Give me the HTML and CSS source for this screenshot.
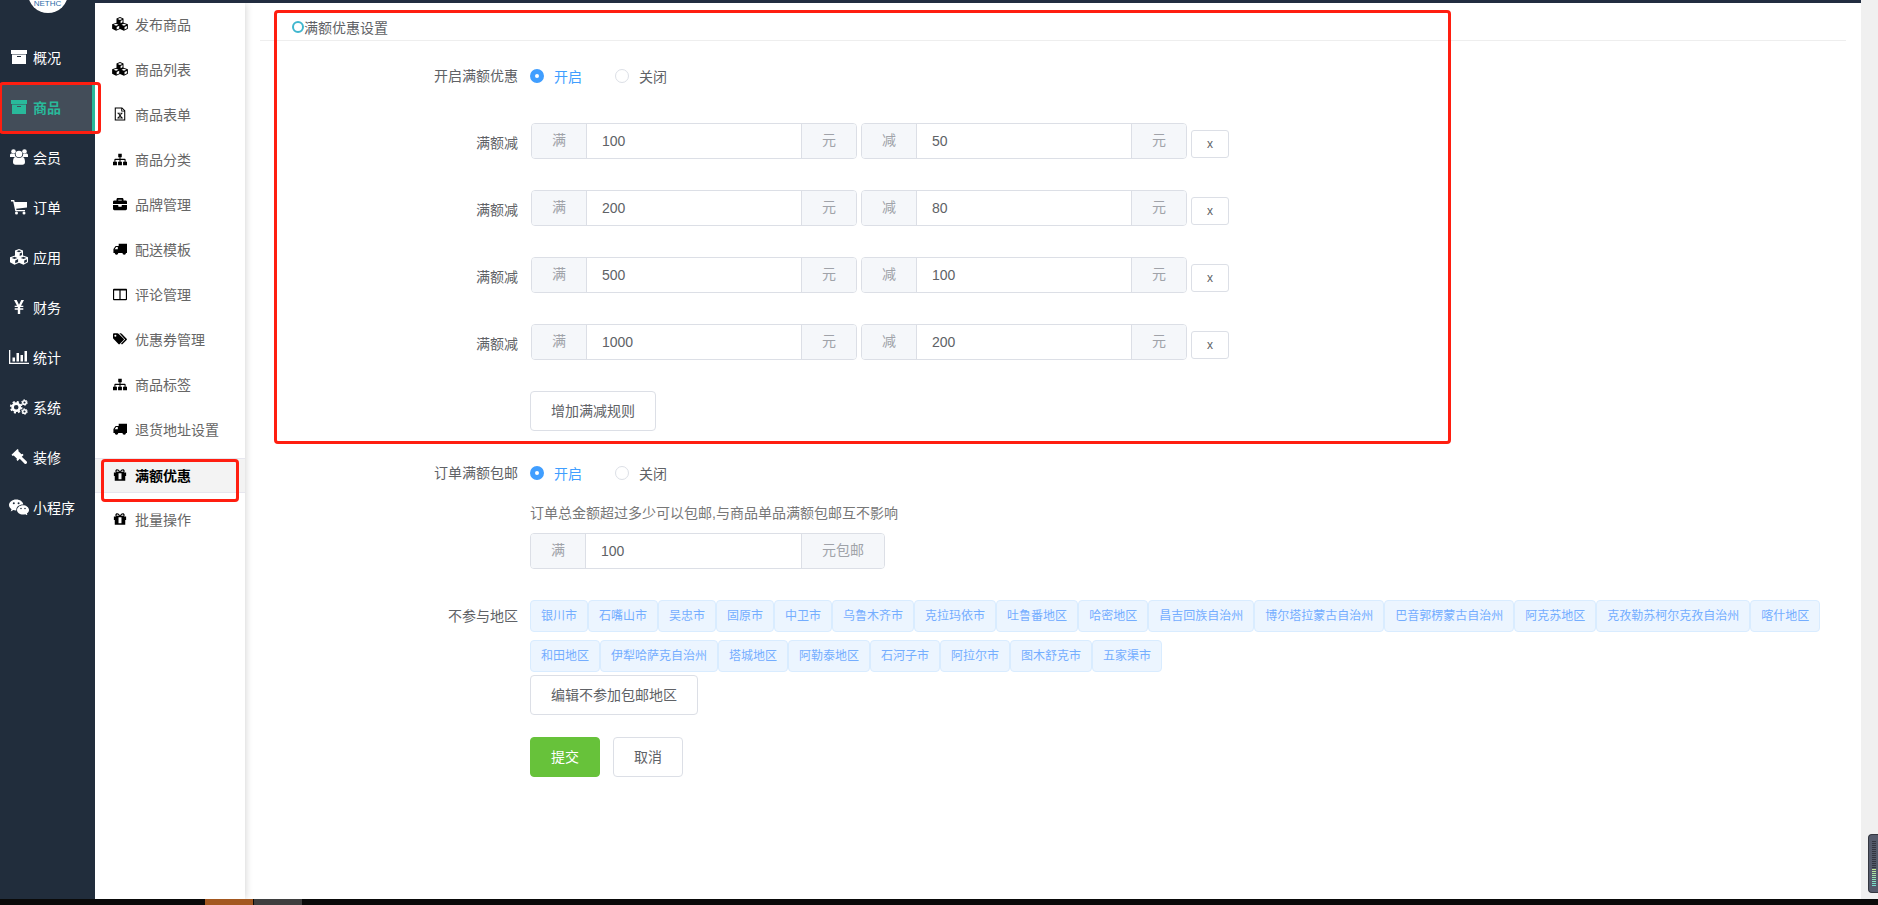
FILE: index.html
```html
<!DOCTYPE html>
<html lang="zh-CN">
<head>
    <meta charset="UTF-8">
    <meta name="viewport" content="width=device-width, initial-scale=1.0">
    <title>满额优惠设置</title>
    <link rel="stylesheet" href="styles.css">
</head>
<body>
    <svg class="sprite" aria-hidden="true">
        <symbol id="i-archive" viewBox="0 0 16 16"><path d="M0 1h16v4H0zM1 5.500h14V15H1zM6 7h4v1H6z" fill-rule="evenodd"/></symbol>
        <symbol id="i-cubes" viewBox="0 0 18 16"><path fill-rule="evenodd" d="M9 0l4 1.600v4.900l5 1.800v5L13.500 15.800 9 13.700l-4.500 2.100L0 13.300v-5l5-1.800V1.600zM9 1.200L6.400 2.200 9 3.300l2.600-1.100zM9.700 4.600v2.500l2.200-1V3.500zM4.500 7.800L1.700 8.900l2.800 1.200 2.800-1.200zM5.200 11.400v2.900l2.900-1.300v-2.900zM13.500 7.800l-2.800 1.100 2.800 1.200 2.800-1.200zM14.200 11.400v2.900l2.700-1.500v-2.600z"/></symbol>
        <symbol id="i-users" viewBox="0 0 18 16"><circle cx="3.500" cy="2.500" r="2.300"/><circle cx="14.500" cy="2.500" r="2.300"/><circle cx="9" cy="5" r="3.300"/><path d="M0 8V6.500C0 5 .8 4.300 1.800 4.600c1 .6 2 .6 3 .3 0 1.200.4 2.300 1.200 3.100H0zM18 8V6.500c0-1.500-.8-2.200-1.800-1.900-1 .6-2 .6-3 .3 0 1.200-.4 2.300-1.200 3.100zM3 13c0-3 1-5 3-4.900 1.900 1.200 4.100 1.200 6 0 2-.1 3 1.900 3 4.900 0 1.800-1 2.700-2.500 2.700h-7C4 15.700 3 14.800 3 13z"/></symbol>
        <symbol id="i-cart" viewBox="0 0 16 16"><path d="M0 1h3.200l.5 2H16v5.400L5.200 9.800l.3 1.200H14v1.300H4.300L2.200 2.400H0z"/><circle cx="5.500" cy="14" r="1.500"/><circle cx="13" cy="14" r="1.500"/></symbol>
        <symbol id="i-yen" viewBox="0 0 16 16"><path d="M3 1h2.700L8 5.800 10.300 1H13L10 6.700h2.300v1.400H9.200v1.200h3.100v1.400H9.200V15H6.800v-4.300H3.700V9.300h3.100V8.100H3.700V6.700H6z"/></symbol>
        <symbol id="i-chart" viewBox="0 0 20 16"><path d="M0 1h1.300v12.700H20V15H0zM3.500 8.500H6v4H3.500zM7.500 4H10v8.500H7.500zM11.500 6H14v6.500h-2.500zM15.500 2H18v10.500h-2.500z"/></symbol>
        <symbol id="i-cogs" viewBox="0 0 18 16"><circle cx="6.200" cy="8.200" r="3.600" fill="none" stroke="currentColor" stroke-width="2.600"/><circle cx="6.200" cy="8.200" r="5.400" fill="none" stroke="currentColor" stroke-width="1.800" stroke-dasharray="2.120 2.120"/><circle cx="14.500" cy="3.500" r="1.800" fill="none" stroke="currentColor" stroke-width="1.500"/><circle cx="14.500" cy="3.500" r="2.800" fill="none" stroke="currentColor" stroke-width="1" stroke-dasharray="1.470 1.470"/><circle cx="14.500" cy="12.500" r="1.800" fill="none" stroke="currentColor" stroke-width="1.500"/><circle cx="14.500" cy="12.500" r="2.800" fill="none" stroke="currentColor" stroke-width="1" stroke-dasharray="1.470 1.470"/></symbol>
        <symbol id="i-gavel" viewBox="0 0 16 16"><path d="M6.500 0l1.200 1-.5 1 3.300 3.300 1-.5 1.100 1.100-6 6-1.100-1.100.5-1L2.700 6.500l-1 .5L.5 5.800z"/><path d="M10.500 7.500l5 4.800c.7.700.7 1.600.1 2.200s-1.600.6-2.200-.1l-4.900-4.900z"/></symbol>
        <symbol id="i-wechat" viewBox="0 0 20 16"><path fill-rule="evenodd" d="M7.200.5c4 0 6.700 2.300 7.100 4.900-4.300-.1-7.300 2.500-7 6-1 .1-1.900-.1-2.900-.3L1.700 12.500l.8-2.300C1 9.100 0 7.700 0 6 0 3 3.200.5 7.200.5zM4.800 3.200a1 1 0 100 2 1 1 0 000-2zM9.600 3.200a1 1 0 100 2 1 1 0 000-2z"/><path fill-rule="evenodd" d="M14 6.200c3.300 0 6 2.100 6 4.800 0 1.400-.8 2.700-2.100 3.600l.6 1.900-2.200-1.200c-.7.200-1.500.3-2.300.3-3.400 0-6-2-6-4.600s2.700-4.800 6-4.800zM12 8.700a.8.800 0 100 1.600.8.800 0 000-1.600zM16 8.700a.8.800 0 100 1.600.8.800 0 000-1.600z"/></symbol>
        <symbol id="i-excel" viewBox="0 0 14 16"><path fill-rule="evenodd" d="M1 .5h8.500L13 4v11.500H1zM2.200 1.700v12.600h9.600V5.200H8.400V1.700zM9.500 2v2.200h2.100z"/><path d="M4 6.500h2.800v1h-.6L7.100 9l.9-1.500h-.6v-1H10v1h-.7l-1.500 2.300L9.500 12h.7v1H7.300v-1h.7l-1-1.500L6.100 12h.6v1H4v-1h.7l1.600-2.200-1.500-2.300H4z"/></symbol>
        <symbol id="i-sitemap" viewBox="0 0 16 16"><path d="M6 2h4v4H8.600v1.800h4.900c.6 0 .9.400.9.900V11H16v4h-4.500v-4h1.700V9H8.600v2h1.600v4H5.800v-4h1.600V9H2.800v2h1.700v4H0v-4h1.600V8.700c0-.5.300-.9.900-.9h4.900V6H6z"/></symbol>
        <symbol id="i-briefcase" viewBox="0 0 512 512"><path d="M320 336c0 8.840-7.160 16-16 16h-96c-8.840 0-16-7.160-16-16v-48H0v144c0 25.600 22.400 48 48 48h416c25.600 0 48-22.400 48-48V288H320v48zm144-208h-80V80c0-25.600-22.400-48-48-48H176c-25.600 0-48 22.400-48 48v48H48c-25.600 0-48 22.400-48 48v80h512v-80c0-25.600-22.400-48-48-48zm-144 0H192V96h128v32z"/></symbol>
        <symbol id="i-truck" viewBox="0 0 16 16"><path fill-rule="evenodd" d="M6.500 2H16v10.500h-1.200a2 2 0 01-4 0H6a2 2 0 01-4 0H.5V8L3 4.500h3.500zM5.500 5.700H3.600L1.900 8.200h3.600z"/><circle cx="4" cy="12.700" r="1.300"/><circle cx="12.800" cy="12.700" r="1.300"/></symbol>
        <symbol id="i-columns" viewBox="0 0 16 16"><path fill-rule="evenodd" d="M1 2h14c.5 0 1 .4 1 1v11c0 .6-.5 1-1 1H1c-.5 0-1-.4-1-1V3c0-.6.500-1 1-1zm.3 2v9.700h6V4zm7.400 0v9.700h6V4z"/></symbol>
        <symbol id="i-tags" viewBox="0 0 16 16"><path fill-rule="evenodd" d="M0 2.500C0 2 .4 1.500 1 1.500h4c.5 0 1.200.3 1.600.7l5.600 5.500c.5.500.5 1 0 1.500l-4.500 4.600c-.5.500-1 .5-1.500 0L.7 8.100C.3 7.700 0 7 0 6.500zM2.700 3a1.200 1.200 0 100 2.400 1.200 1.200 0 000-2.400z"/><path d="M7.300 1.500h1.400c.5 0 1.200.3 1.600.7l5.300 5.500c.5.500.5 1 0 1.500L11 13.800c-.5.500-1 .5-1.400 0l-.5-.5 4.700-4.800z"/></symbol>
        <symbol id="i-gift" viewBox="0 0 16 16"><path fill-rule="evenodd" d="M4.800 1.500c1.300 0 2.300 1 3.200 2.600.9-1.600 1.900-2.600 3.200-2.600 1.200 0 2.100.8 2.100 1.900 0 .7-.2 1.100-.6 1.600H15v4h-1v5.500H2V9H1V5h2.300c-.4-.5-.6-.9-.6-1.600 0-1.100.9-1.900 2.100-1.900zm0 1.300a.8.800 0 000 1.600h2c-.5-1-1.200-1.600-2-1.600zm6.400 0c-.8 0-1.500.6-2 1.600h2a.8.800 0 000-1.600zM6.300 6v6.800h3.400V6z"/></symbol>
    </svg>

    <nav class="nav">
        <div class="logo"><div class="logo-circle"><span class="logo-name">智慧商汇</span><span class="logo-en">NETHC</span></div></div>
        <a href="#"><svg><use href="#i-archive"/></svg>概况</a>
        <a href="#" class="active"><svg><use href="#i-archive"/></svg>商品<span class="mark mark-nav"></span></a>
        <a href="#"><svg><use href="#i-users"/></svg>会员</a>
        <a href="#"><svg><use href="#i-cart"/></svg>订单</a>
        <a href="#"><svg><use href="#i-cubes"/></svg>应用</a>
        <a href="#"><svg><use href="#i-yen"/></svg>财务</a>
        <a href="#"><svg><use href="#i-chart"/></svg>统计</a>
        <a href="#"><svg><use href="#i-cogs"/></svg>系统</a>
        <a href="#"><svg><use href="#i-gavel"/></svg>装修</a>
        <a href="#"><svg><use href="#i-wechat"/></svg>小程序</a>
    </nav>

    <div class="page">
        <nav class="submenu">
            <a href="#"><svg><use href="#i-cubes"/></svg>发布商品</a>
            <a href="#"><svg><use href="#i-cubes"/></svg>商品列表</a>
            <a href="#"><svg><use href="#i-excel"/></svg>商品表单</a>
            <a href="#"><svg><use href="#i-sitemap"/></svg>商品分类</a>
            <a href="#"><svg><use href="#i-briefcase"/></svg>品牌管理</a>
            <a href="#"><svg><use href="#i-truck"/></svg>配送模板</a>
            <a href="#"><svg><use href="#i-columns"/></svg>评论管理</a>
            <a href="#"><svg><use href="#i-tags"/></svg>优惠券管理</a>
            <a href="#"><svg><use href="#i-sitemap"/></svg>商品标签</a>
            <a href="#"><svg><use href="#i-truck"/></svg>退货地址设置</a>
            <a href="#" class="active"><svg><use href="#i-gift"/></svg>满额优惠<span class="mark mark-sub"></span></a>
            <a href="#"><svg><use href="#i-gift"/></svg>批量操作</a>
        </nav>

        <main class="content">
            <form>
                <section class="rules">
                    <h1><span class="ring"></span>满额优惠设置</h1>
                    <div class="row row-switch">
                        <span class="label">开启满额优惠</span>
                        <div class="field radios">
                            <label><input type="radio" name="enough" checked><span>开启</span></label>
                            <label><input type="radio" name="enough"><span>关闭</span></label>
                        </div>
                    </div>
                    <div class="row row-rule">
                        <label class="label" for="full1">满额减</label>
                        <div class="field rule">
                            <div class="group"><span>满</span><input type="text" id="full1" value="100"><span>元</span></div>
                            <div class="group"><span>减</span><input type="text" aria-label="减" value="50"><span>元</span></div>
                            <button type="button" class="btn btn-small">x</button>
                        </div>
                    </div>
                    <div class="row row-rule">
                        <label class="label" for="full2">满额减</label>
                        <div class="field rule">
                            <div class="group"><span>满</span><input type="text" id="full2" value="200"><span>元</span></div>
                            <div class="group"><span>减</span><input type="text" aria-label="减" value="80"><span>元</span></div>
                            <button type="button" class="btn btn-small">x</button>
                        </div>
                    </div>
                    <div class="row row-rule">
                        <label class="label" for="full3">满额减</label>
                        <div class="field rule">
                            <div class="group"><span>满</span><input type="text" id="full3" value="500"><span>元</span></div>
                            <div class="group"><span>减</span><input type="text" aria-label="减" value="100"><span>元</span></div>
                            <button type="button" class="btn btn-small">x</button>
                        </div>
                    </div>
                    <div class="row row-rule">
                        <label class="label" for="full4">满额减</label>
                        <div class="field rule">
                            <div class="group"><span>满</span><input type="text" id="full4" value="1000"><span>元</span></div>
                            <div class="group"><span>减</span><input type="text" aria-label="减" value="200"><span>元</span></div>
                            <button type="button" class="btn btn-small">x</button>
                        </div>
                    </div>
                    <div class="row">
                        <span class="label"></span>
                        <div class="field"><button type="button" class="btn">增加满减规则</button></div>
                    </div>
                    <span class="mark mark-rules"></span>
                </section>

                <div class="row">
                    <span class="label">订单满额包邮</span>
                    <div class="field">
                        <div class="radios">
                            <label><input type="radio" name="free" checked><span>开启</span></label>
                            <label><input type="radio" name="free"><span>关闭</span></label>
                        </div>
                        <label class="hint" for="freeFull">订单总金额超过多少可以包邮,与商品单品满额包邮互不影响</label>
                        <div class="group group-free"><span>满</span><input type="text" id="freeFull" value="100"><span>元包邮</span></div>
                    </div>
                </div>

                <div class="row row-area">
                    <span class="label">不参与地区</span>
                    <div class="field">
                        <div class="tags">
                            <span>银川市</span><span>石嘴山市</span><span>吴忠市</span><span>固原市</span><span>中卫市</span><span>乌鲁木齐市</span><span>克拉玛依市</span><span>吐鲁番地区</span><span>哈密地区</span><span>昌吉回族自治州</span><span>博尔塔拉蒙古自治州</span><span>巴音郭楞蒙古自治州</span><span>阿克苏地区</span><span>克孜勒苏柯尔克孜自治州</span><span>喀什地区</span><span>和田地区</span><span>伊犁哈萨克自治州</span><span>塔城地区</span><span>阿勒泰地区</span><span>石河子市</span><span>阿拉尔市</span><span>图木舒克市</span><span>五家渠市</span>
                        </div>
                        <button type="button" class="btn">编辑不参加包邮地区</button>
                    </div>
                </div>

                <div class="row">
                    <span class="label"></span>
                    <div class="field actions">
                        <button type="submit" class="btn btn-submit">提交</button>
                        <button type="button" class="btn">取消</button>
                    </div>
                </div>
            </form>
        </main>
    </div>

    <div class="scroll"></div>
    <footer class="taskbar"><span></span><span></span></footer>

    <div class="meter"><i></i></div>
</body>
</html>
```

FILE: styles.css
```css
* {
    box-sizing: border-box;
}
body {
    margin: 0;
    min-height: 100vh;
    display: grid;
    grid-template-columns: 95px 1fr 17px;
    grid-template-rows: 1fr 6px;
    position: relative;
    background: #fff;
    color: #606266;
    font-family: "Liberation Sans", "Noto Sans CJK SC", sans-serif;
    font-size: 14px;
}
a {
    text-decoration: none;
}
.sprite {
    position: absolute;
    width: 0;
    height: 0;
}

/* left navigation */
.nav {
    background: #212d3c;
}
.logo {
    height: 33px;
    overflow: hidden;
}
.logo-circle {
    width: 40px;
    height: 40px;
    margin: -27px auto 0;
    border-radius: 50%;
    background: #fff;
    display: flex;
    flex-direction: column;
    align-items: center;
    justify-content: flex-end;
    padding-bottom: 5px;
    line-height: 8px;
    overflow: hidden;
}
.logo-name {
    font-size: 8px;
    font-weight: bold;
    color: #1d3d66;
}
.logo-en {
    font-size: 8px;
    color: #2c6ca8;
}
.nav a {
    display: flex;
    align-items: center;
    gap: 4px;
    height: 50px;
    padding: 0 0 2px 9px;
    position: relative;
    color: #fff;
}
.nav svg {
    width: 20px;
    height: 16px;
    fill: currentColor;
}
.nav a.active {
    background: #434d59;
    border-right: 3px solid #29b99b;
    color: #29b99b;
    font-weight: bold;
}

/* second level menu */
.page {
    display: flex;
    min-width: 0;
    border-top: 3px solid #222d40;
}
.submenu {
    flex: none;
    width: 150px;
    padding-top: 5px;
    box-shadow: 0 0 8px rgba(0, 0, 0, 0.2);
    clip-path: inset(0 -10px 0 0);
}
.submenu a {
    display: flex;
    align-items: center;
    gap: 6px;
    height: 35px;
    margin-bottom: 10px;
    padding: 0 0 3px 16px;
    position: relative;
    color: #666;
}
.submenu svg {
    width: 18px;
    height: 14px;
    fill: #000;
}
.submenu a.active {
    padding-bottom: 1px;
    background: #f3f3f3;
    border: solid #e6e6ee;
    border-width: 1px 0;
    color: #000;
    font-weight: bold;
}

/* form */
.content {
    flex: 1;
    min-width: 0;
    padding: 0 15px 20px;
}
.rules {
    position: relative;
    padding-bottom: 22px;
}
h1 {
    display: flex;
    align-items: center;
    height: 38px;
    margin: 0 0 15px;
    padding: 10px 0 0 32px;
    border-bottom: 1px solid #eee;
    font-size: 14px;
    font-weight: normal;
}
.ring {
    width: 12px;
    height: 12px;
    border: 2px solid #3fb6ce;
    border-radius: 50%;
}
.row {
    display: flex;
}
.label {
    flex: none;
    width: 270px;
    padding-right: 12px;
    line-height: 40px;
    text-align: right;
}
.field {
    flex: 1;
    min-width: 0;
}
.row-switch,
.row-rule {
    margin-bottom: 27px;
}
.radios {
    display: flex;
    gap: 33px;
    height: 40px;
}
.radios label {
    display: flex;
    align-items: center;
    gap: 10px;
}
.radios input {
    appearance: none;
    width: 14px;
    height: 14px;
    margin: 0;
    border: 1px solid #dcdfe6;
    border-radius: 50%;
    background: #fff;
}
.radios input:checked {
    border: 5px solid #409eff;
}
.radios input:checked + span {
    color: #409eff;
}
.rule {
    display: flex;
    align-items: flex-start;
    gap: 4px;
    padding-left: 1px;
}
.group {
    display: flex;
    width: 326px;
    height: 36px;
    border: 1px solid #dcdfe6;
    border-radius: 4px;
    overflow: hidden;
}
.group span {
    flex: none;
    padding: 0 20px;
    background: #f5f7fa;
    color: #a0a3a9;
    line-height: 32px;
}
.group input {
    flex: 1;
    min-width: 0;
    padding: 0 15px;
    border: solid #dcdfe6;
    border-width: 0 1px;
    outline: none;
    color: #606266;
    font: inherit;
}
.group-free {
    width: 355px;
}
.btn {
    height: 40px;
    padding: 0 20px 2px;
    border: 1px solid #dcdfe6;
    border-radius: 4px;
    background: #fff;
    color: #606266;
    font: inherit;
    cursor: pointer;
}
.btn-small {
    height: 28px;
    margin-top: 7px;
    padding: 0 15px;
    border-radius: 3px;
    font-size: 12px;
}
.btn-submit {
    background: #67c23a;
    border-color: #67c23a;
    color: #fff;
}
.hint {
    display: block;
    line-height: 40px;
    color: #777;
}
.row-area {
    margin: 27px 0 22px;
}
.tags {
    display: flex;
    flex-wrap: wrap;
    row-gap: 8px;
    margin: 4px 0 3px;
}
.tags span {
    height: 32px;
    padding: 0 10px;
    border: 1px solid #d9ecff;
    border-radius: 4px;
    background: #ecf5ff;
    color: #74adff;
    font-size: 12px;
    line-height: 30px;
}
.actions {
    display: flex;
    gap: 13px;
}

/* red highlight frames */
.mark {
    position: absolute;
    border: 3px solid #ff1e10;
    border-radius: 4px;
    pointer-events: none;
    z-index: 2;
}
.mark-nav {
    inset: -1px -9px -1px -1px;
}
.mark-sub {
    inset: 0 6px -10px;
}
.mark-rules {
    inset: 7px auto 9px 14px;
    width: 1177px;
    max-width: calc(100% - 28px);
}

/* right and bottom edges */
.scroll {
    background: #f0f0f0;
}
.taskbar {
    grid-column: 1 / -1;
    display: flex;
    gap: 1px;
    padding-left: 205px;
    background: #0a0a0a;
}
.taskbar span {
    width: 48px;
    background: #a35820;
}
.taskbar span + span {
    background: #3f3f3f;
}
.meter {
    position: absolute;
    right: 0;
    bottom: 12px;
    width: 10px;
    height: 59px;
    padding: 6px 2px 6px 3px;
    border: 1px solid #33363f;
    border-right: 0;
    border-radius: 4px 0 0 4px;
    background: #555b6c;
}
.meter i {
    display: block;
    height: 45px;
    background: repeating-linear-gradient(transparent 0 1px, #555b6c 1px 2px), linear-gradient(#33363f 62%, #c3e890 62%, #6fe0d0);
}
```
